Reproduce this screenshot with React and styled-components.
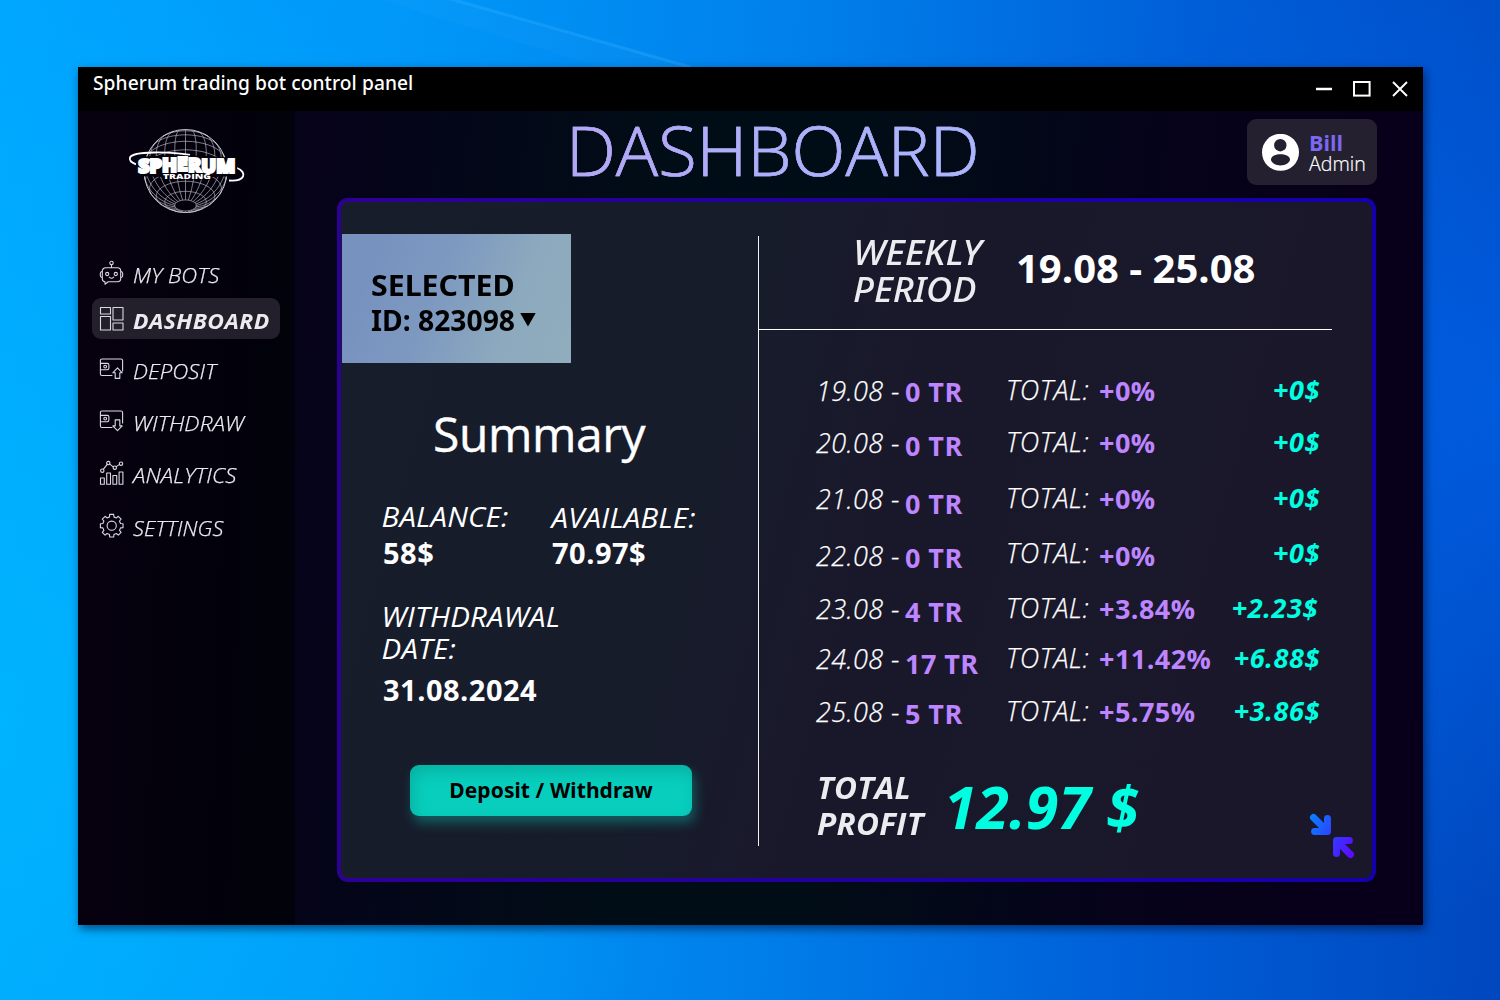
import React from 'react';
import styled, { createGlobalStyle } from 'styled-components';

const Global = createGlobalStyle`
  *, *::before, *::after { box-sizing: border-box; }
  body { margin: 0; font-family: "Open Sans", "Noto Sans", sans-serif; color: #fff; }
`;

const Desktop = styled.main`
  height: 1000px;
  padding: 67px 0 0 78px;
  overflow: hidden;
  background:
    radial-gradient(ellipse 420px 520px at 1500px 400px, rgba(0, 110, 255, 0.45), transparent),
    radial-gradient(ellipse 700px 800px at 0 720px, rgba(0, 196, 255, 0.5), transparent),
    linear-gradient(94deg, #00a5ff 0%, #0096f8 28%, #007fea 52%, #005fd8 76%, #0047be 100%);
`;

const Beam = styled.svg`
  position: absolute;
  left: 0;
  top: 0;
  pointer-events: none;
`;

const Window = styled.section`
  position: relative;
  display: flex;
  flex-direction: column;
  width: 1345px;
  height: 858px;
  background: #000;
  box-shadow: 2px 4px 9px rgba(0, 15, 50, 0.6);
`;

const TitleBar = styled.header`
  display: flex;
  justify-content: space-between;
  height: 44px;
  padding: 2px 15px 0 15px;
`;

const WindowTitle = styled.div`
  font: 500 19.2px/28px "Noto Sans", sans-serif;
  letter-spacing: 0.07px;
`;

const Controls = styled.div`
  display: flex;
  align-items: center;
  gap: 21px;
  height: 39px;
`;

const Body = styled.div`
  display: flex;
  flex: 1;
  background: linear-gradient(95deg, #07021a 14%, #040519 24%, #010d16 42%, #010d16 56%, #05031a 76%, #08001a 92%);
`;

const Sidebar = styled.aside`
  width: 217px;
  padding: 16px 15px 0 14px;
  background: linear-gradient(92deg, #08000f 0%, #03010c 50%, #01020a 100%);
`;

const LogoSvg = styled.svg`
  display: block;
  margin: 0 0 35px 35px;
`;

const NavItem = styled.a`
  display: flex;
  align-items: center;
  gap: 8px;
  height: 41px;
  margin-bottom: ${p => p.$gap}px;
  padding-left: 7px;
  border-radius: 9px;
  background: ${p => (p.$active ? '#231f2b' : 'transparent')};
  color: #ececf0;
`;

const NavText = styled.span`
  padding-top: ${p => (p.$active ? 4 : 5)}px;
  font-size: ${p => (p.$active ? 21.5 : 20.8)}px;
  font-style: italic;
  font-weight: ${p => (p.$active ? 700 : 300)};
  letter-spacing: ${p => (p.$active ? 0.4 : 0.1)}px;
  white-space: nowrap;
  transform: scaleX(${p => p.$stretch});
  transform-origin: left;
  -webkit-text-stroke: ${p => (p.$active ? 0 : 0.25)}px #ececf0;
`;

const Main = styled.div`
  flex: 1;
  padding: 0 46px 0 42px;
`;

const PageHeader = styled.div`
  display: flex;
  justify-content: space-between;
  height: 87px;
`;

const PageTitle = styled.h1`
  margin: 0 0 0 229px;
  width: 420px;
  font-size: 68px;
  line-height: 77px;
  font-weight: 300;
  transform: scaleX(1.037);
  transform-origin: left;
  -webkit-text-stroke: 0.6px #afaff9;
  background: linear-gradient(90deg, #b5a6f6, #a8b8ff);
  background-clip: text;
  -webkit-background-clip: text;
  color: transparent;
`;

const UserCard = styled.div`
  display: flex;
  align-items: center;
  gap: 9px;
  width: 130px;
  height: 66px;
  margin-top: 8px;
  padding-left: 15px;
  border-radius: 9px;
  background: #24202f;
`;

const UserText = styled.div`
  padding: 1px 0 0 1px;
  line-height: 21px;
`;

const UserName = styled.div`
  font-size: 21.5px;
  font-weight: 700;
  color: #7d68f4;
`;

const UserRole = styled.div`
  font-size: 19.6px;
  font-weight: 300;
  -webkit-text-stroke: 0.2px #fff;
`;

const Panel = styled.section`
  display: flex;
  width: 1039px;
  height: 684px;
  border: 4px solid transparent;
  border-radius: 11px;
  background:
    linear-gradient(105deg, #171d2b 0%, #171c2b 36%, #19182b 52%, #1b172a 100%) padding-box,
    linear-gradient(90deg, #2d0094, #1400aa) border-box;
`;

const SummaryColumn = styled.div`
  width: 417px;
  padding-top: 32px;
`;

const BotSelect = styled.div`
  display: flex;
  align-items: flex-start;
  width: 229px;
  height: 129px;
  margin-left: 1px;
  padding: 33px 0 0 29px;
  background: linear-gradient(112deg, #7892bf 15%, #7d99c0 42%, #8ca9be 72%, #90adbd 100%);
  color: #000;
  font: 700 29px/35px "Noto Sans", sans-serif;
`;

const SelectLine = styled.div`
  display: flex;
  align-items: center;
  gap: 5px;
  width: max-content;
  transform: scaleX(${p => p.$stretch});
  transform-origin: left;
  white-space: nowrap;
`;

const SummaryTitle = styled.h2`
  margin: 41px 0 37px 92px;
  font-size: 48px;
  line-height: 60px;
  font-weight: 400;
  letter-spacing: -0.4px;
  -webkit-text-stroke: 0.4px #fff;
`;

const Stats = styled.div`
  display: grid;
  grid-template-columns: 170px 1fr;
  row-gap: 30px;
  padding-left: 41px;
`;

const Stat = styled.div`
  padding-top: ${p => p.$drop || 0}px;
`;

const StatLabel = styled.div`
  width: max-content;
  font-size: 27px;
  line-height: 32px;
  font-style: italic;
  letter-spacing: 0.2px;
  transform: translateX(-0.5px) scaleX(1.09);
  transform-origin: left;
`;

const StatValue = styled.div`
  margin-top: ${p => p.$gap}px;
  padding-left: ${p => p.$inset || 0}px;
  font-size: 29px;
  line-height: 36px;
  font-weight: 700;
  letter-spacing: 0.5px;
`;

const ActionButton = styled.button`
  display: block;
  width: 282px;
  height: 51px;
  margin: 57px 0 0 69px;
  padding: 0;
  border: 0;
  border-radius: 9px;
  background: #08cfbd;
  box-shadow: inset 4px 7px 15px rgba(0, 60, 60, 0.2), 3px 7px 12px rgba(8, 207, 189, 0.36);
  color: #000;
  font: 700 21px/51px "Noto Sans", sans-serif;
  letter-spacing: 0.08px;
`;

const Divider = styled.div`
  width: 1px;
  height: 610px;
  margin-top: 34px;
  background: #f2f2f5;
`;

const WeekColumn = styled.div`
  flex: 1;
`;

const WeekHeader = styled.div`
  display: flex;
  width: 573px;
  height: 128px;
  padding: 32px 0 0 94px;
  border-bottom: 1px solid #fff;
`;

const WeekLabel = styled.div`
  width: 163px;
  color: #ececf0;
  font: italic 500 33.8px/37px "Noto Sans", sans-serif;
`;

const WeekLine = styled.div`
  width: max-content;
  transform: scaleX(${p => p.$stretch});
  transform-origin: left;
`;

const WeekRange = styled.div`
  padding-top: 6px;
  font-size: 40px;
  line-height: 56px;
  font-weight: 700;
`;

const DayList = styled.div`
  padding: 42px 0 42px 57px;
`;

const DayRow = styled.div`
  display: grid;
  grid-template-columns: 89px 101px 93px 109px 112px;
  height: ${p => p.$height}px;
  font-size: 27px;
  line-height: 36px;
  white-space: nowrap;
`;

const Light = styled.span`
  margin-top: ${p => p.$drop || 0}px;
  font-style: italic;
  font-weight: 300;
  letter-spacing: ${p => p.$spacing}px;
  -webkit-text-stroke: 0.25px #fff;
`;

const Accent = styled.span`
  margin-top: ${p => p.$drop}px;
  font-weight: 700;
  letter-spacing: 0.45px;
  color: #bd85ff;
`;

const Gain = styled.span`
  padding-right: ${p => p.$inset || 0}px;
  text-align: right;
  font-style: italic;
  font-weight: 700;
  letter-spacing: 0.6px;
  color: #00ffe0;
`;

const ProfitRow = styled.div`
  display: flex;
  align-items: flex-start;
  padding: 0 17px 0 58px;
`;

const ProfitLabel = styled.div`
  width: 127px;
  color: #ececf0;
  font-size: 30px;
  line-height: 36px;
  font-style: italic;
  font-weight: 700;
  letter-spacing: 0.3px;
  transform: scaleX(1.05);
  transform-origin: left;
`;

const ProfitValue = styled.div`
  flex: 1;
  color: #00ffe0;
  font-size: 59px;
  line-height: 72px;
  font-style: italic;
  font-weight: 700;
`;

const CollapseSvg = styled.svg`
  display: block;
  margin-top: 43px;
`;

const lineIcon = {
  width: 26, height: 26, viewBox: '0 0 26 26', fill: 'none',
  stroke: '#d9d9e2', strokeWidth: 1.1, strokeLinejoin: 'round', strokeLinecap: 'round',
};

const RobotIcon = () => (
  <svg {...lineIcon}>
    <circle cx="12.5" cy="3" r="1.7" />
    <path d="M12.5 4.7v3.1M6.5 7.8h12a3.2 3.2 0 0 1 3.2 3.2v7.6a3.2 3.2 0 0 1-3.2 3.2H9.2L6 24.2v-2.4a3 3 0 0 1-2.7-3V11a3.2 3.2 0 0 1 3.2-3.2M3.3 11.2c-1.5.3-2 1.3-2 2.4v1.8c0 1.2.6 2 2 2.3M21.7 11.2c1.5.3 2 1.3 2 2.4v1.8c0 1.2-.6 2-2 2.3M10.3 17.2c1.2 1.1 3.2 1.1 4.4 0" />
    <circle cx="8.2" cy="14" r="1.6" /><circle cx="16.8" cy="14" r="1.6" />
  </svg>
);
const TilesIcon = () => (
  <svg {...lineIcon}>
    <rect x="1.5" y="1.5" width="10" height="6.5" /><rect x="1.5" y="10.5" width="10" height="13.5" />
    <rect x="14" y="1.5" width="10" height="12.5" /><rect x="14" y="17" width="10" height="7" />
  </svg>
);
const WalletIcon = ({ up }) => (
  <svg {...lineIcon}>
    <path d="M13 19.5H3a1.6 1.6 0 0 1-1.6-1.6V4.6A1.6 1.6 0 0 1 3 3h19a1.6 1.6 0 0 1 1.6 1.6V15M1.4 7.4h6.8a1.7 1.7 0 0 1 1.700 1.700v3a1.7 1.7 0 0 1-1.700 1.700H1.400" />
    <circle cx="6.2" cy="10.600" r="1.4" />
    <path d={up ? 'M18.5 11.8l4.7 5h-2.4v5.6h-4.6v-5.6h-2.4z' : 'M18.5 22.6l4.7-4.700h-2.400v-6h-4.600v6h-2.400z'} />
  </svg>
);
const ChartIcon = () => (
  <svg {...lineIcon}>
    <path d="M1.5 18h3.8v6.3H1.5zM7.7 13h3.8v11.3H7.7zM13.9 15.5h3.8v8.8h-3.8zM20.1 12h3.8v12.3h-3.8zM4.5 9.2l3.7-4.9M10.7 4.1l3.6 2.8M17.3 6.6l3.2-2.2" />
    <circle cx="3.3" cy="10.7" r="1.7" /><circle cx="9.3" cy="3.1" r="1.7" />
    <circle cx="15.8" cy="7.7" r="1.7" /><circle cx="22" cy="3.7" r="1.7" />
  </svg>
);

const gearPath = (() => {
  const pts = [];
  for (let i = 0; i < 8; i += 1) {
    [[-14, 9.1], [-10, 11.5], [10, 11.5], [14, 9.1]].forEach(([a, r]) => {
      const t = ((i * 45 + a) * Math.PI) / 180;
      pts.push(`${(12.7 + r * Math.sin(t)).toFixed(2)} ${(12.7 - r * Math.cos(t)).toFixed(2)}`);
    });
  }
  return `M${pts.join('L')}Z`;
})();
const GearIcon = () => (
  <svg {...lineIcon}><path d={gearPath} /><circle cx="12.7" cy="12.7" r="4.6" /></svg>
);

/* Wireframe globe seen from below: latitude and longitude lines, front side only. */
const globePath = (() => {
  const R = 41.5, sinT = 0.51, cosT = 0.86, rad = Math.PI / 180;
  const project = (lat, lon) => {
    const x = R * Math.cos(lat * rad) * Math.sin(lon * rad);
    const y = R * Math.sin(lat * rad);
    const z = R * Math.cos(lat * rad) * Math.cos(lon * rad);
    return [185.5 + x, 171 - (y * cosT + z * sinT), z * cosT - y * sinT];
  };
  const trace = points => {
    let d = '', pen = false;
    points.forEach(([x, y, z]) => {
      if (z < 0) { pen = false; return; }
      d += `${pen ? 'L' : 'M'}${x.toFixed(1)} ${y.toFixed(1)}`;
      pen = true;
    });
    return d;
  };
  let d = '';
  for (let lat = -75; lat <= 60; lat += 15) {
    const line = [];
    for (let lon = -180; lon <= 180; lon += 5) line.push(project(lat, lon));
    d += trace(line);
  }
  for (let lon = -180; lon < 180; lon += 15) {
    const line = [];
    for (let lat = -75; lat <= 85; lat += 5) line.push(project(lat, lon));
    d += trace(line);
  }
  return d;
})();

const Logo = () => (
  <LogoSvg width="120" height="90" viewBox="127 127 120 90" fill="none">
    <path d={globePath} stroke="#c0c0ca" strokeWidth="0.65" />
    <circle cx="185.5" cy="171" r="41.5" stroke="#c9c9d2" strokeWidth="1" />
    <path d="M190 155C170 151.500 133 151 130 157.500c-1 2.500 1.500 5 6 6.800M237 168c5 2 7.500 5.500 6 8.500s-7 4.500-14 4" stroke="#fff" strokeWidth="1.8" />
    <path d="M136.500 157Q186 153 236 158L238 176L212 177V179.500H162V177L136 176z" fill="#05030d" />
    <text fontFamily="Open Sans, sans-serif" fontWeight="800" fontSize="19.5" fill="#fff" stroke="#fff" strokeWidth="2.2" strokeLinejoin="miter" textLength="97" lengthAdjust="spacingAndGlyphs" x="138.200" y="173.400" dy="0 -0.9 -0.700 -0.400 0.400 0.700 0.700">SPHERUM</text>
    <text fontFamily="Open Sans, sans-serif" fontWeight="800" fontSize="7" fill="#fff" textLength="48" lengthAdjust="spacingAndGlyphs" x="163" y="178.700">TRADING</text>
  </LogoSvg>
);

const Collapse = () => (
  <CollapseSvg width="46" height="46" viewBox="0 0 46 46" fill="none" strokeWidth="7" strokeLinecap="round" strokeLinejoin="round">
    <defs>
      <linearGradient id="inward" gradientUnits="userSpaceOnUse" x1="0" y1="10" x2="46" y2="34">
        <stop offset="0" stopColor="#0a7cff" /><stop offset="0.5" stopColor="#2f3fff" /><stop offset="1" stopColor="#5a0cff" />
      </linearGradient>
    </defs>
    <path stroke="url(#inward)" d="M4.500 4.500L16 16M18.500 5.500V18.500H5.600M41.500 41.500L30 30M27.500 40.500V27.500H40.400" />
  </CollapseSvg>
);

const NAV = [
  { label: 'MY BOTS', icon: <RobotIcon />, gap: 5, stretch: 1.06 },
  { label: 'DASHBOARD', icon: <TilesIcon />, gap: 9, active: true, stretch: 1.065 },
  { label: 'DEPOSIT', icon: <WalletIcon up />, gap: 11, stretch: 1.065 },
  { label: 'WITHDRAW', icon: <WalletIcon />, gap: 11, stretch: 1.085 },
  { label: 'ANALYTICS', icon: <ChartIcon />, gap: 12, stretch: 1.07 },
  { label: 'SETTINGS', icon: <GearIcon />, gap: 0, stretch: 1.045 },
];

const DAYS = [
  { date: '19.08', trades: 0, pct: '+0%', gain: '+0$', height: 52, drops: [1, 2, 1] },
  { date: '20.08', trades: 0, pct: '+0%', gain: '+0$', height: 56, drops: [1, 4, 1] },
  { date: '21.08', trades: 0, pct: '+0%', gain: '+0$', height: 55, drops: [1, 6, 1] },
  { date: '22.08', trades: 0, pct: '+0%', gain: '+0$', height: 55, drops: [3, 5, 3] },
  { date: '23.08', trades: 4, pct: '+3.84%', gain: '+2.23$', height: 50, drops: [1, 4, 1], inset: 2 },
  { date: '24.08', trades: 17, pct: '+11.42%', gain: '+6.88$', height: 53, drops: [1, 6, 1] },
  { date: '25.08', trades: 5, pct: '+5.75%', gain: '+3.86$', height: 35, drops: [1, 3, 1] },
];

export default function App() {
  return (
    <Desktop>
      <Global />
      <Beam width="1500" height="67" viewBox="0 0 1500 67">
        <path d="M450 0L690 67H600L380 0z" fill="#fff" opacity="0.018" />
        <path d="M440 -4L690 67" stroke="#4dbdff" strokeWidth="3" opacity="0.24" />
      </Beam>
      <Window>
        <TitleBar>
          <WindowTitle>Spherum trading bot control panel</WindowTitle>
          <Controls>
            <svg width="16" height="16"><path d="M0 8h16" stroke="#fff" strokeWidth="2.5" /></svg>
            <svg width="18" height="16"><rect x="1" y="1" width="15.6" height="13.6" fill="none" stroke="#fff" strokeWidth="2" /></svg>
            <svg width="16" height="16"><path d="M1 1l14 14M15 1l-14 14" stroke="#fff" strokeWidth="1.9" /></svg>
          </Controls>
        </TitleBar>
        <Body>
          <Sidebar>
            <Logo />
            {NAV.map(n => (
              <NavItem key={n.label} $gap={n.gap} $active={n.active}>
                {n.icon}
                <NavText $active={n.active} $stretch={n.stretch}>{n.label}</NavText>
              </NavItem>
            ))}
          </Sidebar>
          <Main>
            <PageHeader>
              <PageTitle>DASHBOARD</PageTitle>
              <UserCard>
                <svg width="37" height="37" viewBox="0 0 37 37">
                  <circle cx="18.5" cy="18.3" r="18.5" fill="#fff" />
                  <circle cx="18.3" cy="11.2" r="6.2" fill="#24202f" />
                  <path d="M9 25.5c0-3.6 5-5.3 9.4-5.3S28 21.9 28 25.5c0 3.2-5 5.9-9.6 5.9S9 28.7 9 25.5z" fill="#24202f" />
                </svg>
                <UserText>
                  <UserName>Bill</UserName>
                  <UserRole>Admin</UserRole>
                </UserText>
              </UserCard>
            </PageHeader>
            <Panel>
              <SummaryColumn>
                <BotSelect>
                  <div>
                    <SelectLine $stretch={1.045}>SELECTED</SelectLine>
                    <SelectLine $stretch={0.975}>
                      ID: 823098
                      <svg width="16" height="14"><path d="M0 0h16L8 13.5z" /></svg>
                    </SelectLine>
                  </div>
                </BotSelect>
                <SummaryTitle>Summary</SummaryTitle>
                <Stats>
                  <Stat>
                    <StatLabel>BALANCE:</StatLabel>
                    <StatValue $gap={2} $inset={1}>58$</StatValue>
                  </Stat>
                  <Stat $drop={1}>
                    <StatLabel>AVAILABLE:</StatLabel>
                    <StatValue $gap={1}>70.97$</StatValue>
                  </Stat>
                  <Stat>
                    <StatLabel>WITHDRAWAL<br />DATE:</StatLabel>
                    <StatValue $gap={7} $inset={1}>31.08.2024</StatValue>
                  </Stat>
                </Stats>
                <ActionButton>Deposit / Withdraw</ActionButton>
              </SummaryColumn>
              <Divider />
              <WeekColumn>
                <WeekHeader>
                  <WeekLabel>
                    <WeekLine $stretch={1.1}>WEEKLY</WeekLine>
                    <WeekLine $stretch={1.065}>PERIOD</WeekLine>
                  </WeekLabel>
                  <WeekRange>19.08 - 25.08</WeekRange>
                </WeekHeader>
                <DayList>
                  {DAYS.map(d => (
                    <DayRow key={d.date} $height={d.height}>
                      <Light $drop={d.drops[0]} $spacing={0.4}>{d.date} -</Light>
                      <Accent $drop={d.drops[1]}>{d.trades} TR</Accent>
                      <Light $spacing={0.5}>TOTAL:</Light>
                      <Accent $drop={d.drops[2]}>{d.pct}</Accent>
                      <Gain $inset={d.inset}>{d.gain}</Gain>
                    </DayRow>
                  ))}
                </DayList>
                <ProfitRow>
                  <ProfitLabel>TOTAL<br />PROFIT</ProfitLabel>
                  <ProfitValue>12.97 $</ProfitValue>
                  <Collapse />
                </ProfitRow>
              </WeekColumn>
            </Panel>
          </Main>
        </Body>
      </Window>
    </Desktop>
  );
}
